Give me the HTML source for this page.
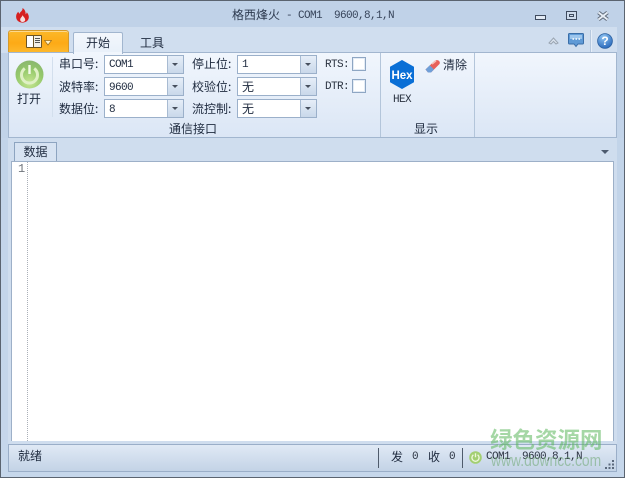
<!DOCTYPE html>
<html><head><meta charset="utf-8"><style>
html,body{margin:0;padding:0;width:625px;height:478px;overflow:hidden;background:#c4d5ea}
*{box-sizing:border-box}
#w{position:relative;width:625px;height:478px;overflow:hidden;font:12px "WenQuanYi Zen Hei","Noto Sans CJK SC",sans-serif;color:#1e2a3e;background:linear-gradient(#c0d2e8,#c6d7eb);border:1px solid #5b6470}
.a{position:absolute;white-space:nowrap}
.m{font-family:"Liberation Mono",monospace;font-size:11px;letter-spacing:-.6px;color:#2c3442}
.l{font-size:12px;line-height:16px;color:#1e2a3e}
.c{position:absolute;width:80px;height:19px;background:#fff;border:1px solid #9bb0ca}
.c i{position:absolute;right:0;top:0;width:16px;height:17px;background:linear-gradient(#e6eef8,#c9d8ea);border-left:1px solid #a8bbd2}
.c i:after{content:"";position:absolute;left:4px;top:7px;border:3px solid transparent;border-top:3px solid #47505e;border-bottom:0}
.c span{position:absolute;left:4px;top:1px;font-size:12px;line-height:16px;color:#1e2a3e}
.c span.m{left:4px;top:2px;line-height:14px;font-size:11px}
.k{position:absolute;width:14px;height:14px;background:#fff;border:1px solid #8ea6c3;box-shadow:inset 0 0 0 1px #e3ebf5}
</style></head><body><div id="w">
<!-- tab strip -->
<div class="a" style="left:-1px;top:26px;width:617px;height:26px;background:#d0deef"></div>
<!-- flame -->
<svg class="a" style="left:14px;top:7px" width="15" height="15" viewBox="0 0 15 15"><path d="M7.5 0C8 3 5 3.500 4.500 6 4 5 3.500 4.500 3.200 3.800 1.500 5.500.8 7.500 1.200 9.800 1.700 12.800 4.200 14.600 7.600 14.600 11 14.600 13.600 12.400 13.800 9.400 14 7 12.600 5.400 11.800 4.200 11.600 5.200 11.200 5.800 10.600 6.200 10.800 3.600 9.600 1.200 7.500 0Z" fill="#d61f1f"/><path d="M7.600 7C7.400 8.800 5 9.800 5.200 12 5.400 13.400 6.400 14 7.600 14 9 14 10.200 13.200 10.200 11.800 10.200 9.800 8.200 9 7.600 7Z" fill="#f5dede"/></svg>
<!-- title -->
<div class="a" style="left:231px;top:6px;font-size:12px;line-height:16px;color:#2d3a4f">格西烽火</div>
<div class="a m" style="left:285px;top:8px;line-height:14px;color:#37445a;white-space:pre">- COM1  9600,8,1,N</div>
<!-- window buttons -->
<div class="a" style="left:534px;top:14px;width:11px;height:5px;border:1px solid #3f4b5e;background:#e2eaf4"></div>
<div class="a" style="left:565px;top:10px;width:11px;height:9px;border:1px solid #3f4b5e;background:#cfdcec"><div style="position:absolute;left:2px;top:2px;width:5px;height:3px;border:1px solid #3f4b5e"></div></div>
<svg class="a" style="left:596px;top:10px" width="12" height="10" viewBox="0 0 12 10"><path d="M1.500 1.500 L10.500 8.500 M10.500 1.500 L1.500 8.500" stroke="#5c6776" stroke-width="3.800"/><path d="M1.500 1.500 L10.500 8.500 M10.500 1.500 L1.500 8.500" stroke="#e6edf5" stroke-width="2"/></svg>
<!-- orange button -->
<div class="a" style="left:7px;top:29px;width:61px;height:23px;border:1px solid #d49a2c;border-bottom:0;border-radius:3px 3px 0 0;background:linear-gradient(#fcb829 0,#fdaa16 55%,#fdb92f 100%);box-shadow:inset 0 1px 0 #fdd98c"></div>
<div class="a" style="left:25px;top:34px;width:16px;height:13px;background:#fff;border:1px solid #6d5524;border-radius:1px"><div style="position:absolute;left:6px;top:0;width:8px;height:11px;background:#f4f0e6;border-left:1px solid #6d5524"><div style="position:absolute;left:1px;top:2px;width:5px;height:6px;background:repeating-linear-gradient(#555 0 1px,transparent 1px 2px)"></div></div></div>
<svg class="a" style="left:43px;top:39px" width="8" height="6" viewBox="0 0 8 6"><path d="M.5.5H7.500L4 5Z" fill="#fff2c8" stroke="#9a6d1c" stroke-width=".7"/></svg>
<!-- tabs -->
<div class="a" style="left:72px;top:31px;width:50px;height:22px;background:linear-gradient(#f3f7fc,#e8f0fa);border:1px solid #a2b6cf;border-bottom:0;border-radius:2px 2px 0 0;z-index:2;text-align:center;line-height:19px;font-size:12px">开始</div>
<div class="a" style="left:139px;top:34px;font-size:12px;line-height:16px">工具</div>
<!-- ribbon right icons -->
<svg class="a" style="left:547px;top:35px" width="11" height="10" viewBox="0 0 11 10"><path d="M1 7 L5.500 2 L10 7 L8 8 L5.500 5.500 L3 8Z" fill="#dbe4ef" stroke="#9aa5b2"/></svg>
<svg class="a" style="left:567px;top:32px" width="16" height="15" viewBox="0 0 16 15"><path d="M1.500.5H14.500Q15.500.5 15.500 1.500V10Q15.500 11 14.500 11H10L8 13.500 6 11H1.500Q.5 11 .5 10V1.500Q.5.5 1.500.5Z" fill="#5f9ad6" stroke="#3a6ea8"/><path d="M2 2H14V6H2Z" fill="#9cc5ec"/><path d="M4.500 6H6M7.500 6H9M10.500 6H12" stroke="#fff" stroke-width="1.400"/></svg>
<div class="a" style="left:589px;top:29px;width:1px;height:22px;background:#b6c8de;box-shadow:1px 0 0 #e6eef8"></div>
<svg class="a" style="left:596px;top:32px" width="16" height="16" viewBox="0 0 16 16"><defs><radialGradient id="h" cx=".4" cy=".25" r=".85"><stop offset="0" stop-color="#8fc4f2"/><stop offset="1" stop-color="#1f5fb5"/></radialGradient></defs><circle cx="8" cy="8" r="7.400" fill="url(#h)" stroke="#2a5f9f" stroke-width=".8"/><text x="8" y="12.200" text-anchor="middle" font-family="Liberation Sans" font-weight="bold" font-size="12" fill="#fff">?</text></svg>
<!-- ribbon -->
<div class="a" style="left:7px;top:51px;width:609px;height:86px;background:linear-gradient(#f1f6fd,#dbe6f5);border:1px solid #a2b6cf"></div>
<div class="a" style="left:73px;top:51px;width:48px;height:2px;background:#f1f6fd;z-index:3"></div>
<div class="a" style="left:379px;top:52px;width:1px;height:84px;background:#b3c5da"></div>
<div class="a" style="left:473px;top:52px;width:1px;height:84px;background:#b3c5da"></div>
<div class="a" style="left:51px;top:56px;width:1px;height:60px;background:#d3dfed"></div>
<!-- power -->
<svg class="a" style="left:14px;top:59px" width="29" height="29" viewBox="0 0 29 29"><defs><radialGradient id="p" cx=".5" cy=".8" r=".8"><stop offset="0" stop-color="#c6e692"/><stop offset=".6" stop-color="#95c96b"/><stop offset="1" stop-color="#8ab66f"/></radialGradient></defs><circle cx="14.500" cy="14.500" r="14" fill="url(#p)"/><path d="M9.800 8.500A8 8 0 1 0 19.200 8.500" fill="none" stroke="#dff0c4" stroke-width="3"/><path d="M14.500 5V14" stroke="#f3faea" stroke-width="2.400"/></svg>
<div class="a l" style="left:16px;top:90px">打开</div>
<!-- labels -->
<div class="a l" style="left:58px;top:55px">串口号:</div>
<div class="a l" style="left:58px;top:78px">波特率:</div>
<div class="a l" style="left:58px;top:100px">数据位:</div>
<div class="a l" style="left:191px;top:55px">停止位:</div>
<div class="a l" style="left:191px;top:78px">校验位:</div>
<div class="a l" style="left:191px;top:100px">流控制:</div>
<div class="c" style="left:103px;top:54px"><span class="m">COM1</span><i></i></div>
<div class="c" style="left:103px;top:76px"><span class="m" style="top:3px">9600</span><i></i></div>
<div class="c" style="left:103px;top:98px"><span class="m" style="top:3px">8</span><i></i></div>
<div class="c" style="left:236px;top:54px"><span class="m">1</span><i></i></div>
<div class="c" style="left:236px;top:76px"><span>无</span><i></i></div>
<div class="c" style="left:236px;top:98px"><span>无</span><i></i></div>
<div class="a m" style="left:324px;top:57px;line-height:14px">RTS:</div>
<div class="a m" style="left:324px;top:79px;line-height:14px">DTR:</div>
<div class="k" style="left:351px;top:56px"></div>
<div class="k" style="left:351px;top:78px"></div>
<div class="a l" style="left:168px;top:120px">通信接口</div>
<!-- hex -->
<svg class="a" style="left:389px;top:59px" width="24" height="29" viewBox="0 0 24 29"><path d="M12 .5 23.500 7V22L12 28.500.5 22V7Z" fill="#0a6fd6" stroke="#0a6fd6" stroke-linejoin="round"/><text x="12" y="19" text-anchor="middle" font-family="Liberation Sans" font-weight="bold" font-size="11.500" fill="#fff">Hex</text></svg>
<div class="a m" style="left:392px;top:92px;line-height:14px">HEX</div>
<!-- eraser -->
<svg class="a" style="left:424px;top:58px" width="16" height="15" viewBox="0 0 16 15"><path d="M.5 10.500 9.500 2Q11.500.5 13.500 1.500 15.500 3 14.500 5L6 13.500H3Z" fill="#e8605a"/><path d="M.5 10.500 4.800 6.300 9 10.500 6 13.500H3Z" fill="#6f9fd8"/><path d="M7 5 11 1.800" stroke="#f6c0b8" stroke-width="1.600"/></svg>
<div class="a l" style="left:442px;top:56px">清除</div>
<div class="a l" style="left:413px;top:120px">显示</div>
<!-- body -->
<div class="a" style="left:-1px;top:137px;width:625px;height:2px;background:#c4d5ea"></div>
<div class="a" style="left:7px;top:137px;width:609px;height:307px;background:#cfddee"></div>
<div class="a" style="left:13px;top:141px;width:43px;height:20px;background:#d7e3f2;border:1px solid #8da4c0;border-bottom:0;text-align:center;line-height:17px;font-size:12px">数据</div>
<div class="a" style="left:600px;top:149px;border:4px solid transparent;border-top:4px solid #4d5a6e;border-bottom:0"></div>
<div class="a" style="left:10px;top:160px;width:603px;height:280px;background:#fff;border:1px solid #9db0c8;border-width:1px 1px 0 1px"></div>
<div class="a" style="left:26px;top:161px;width:1px;height:279px;border-left:1px dotted #aab0b8"></div>
<div class="a m" style="left:17px;top:161px;line-height:14px;color:#70757c;font-size:12px">1</div>
<!-- status bar -->
<div class="a" style="left:7px;top:443px;width:609px;height:28px;background:linear-gradient(#e0e9f5,#c3d3e6);border:1px solid #9aaec8"></div>
<div class="a l" style="left:17px;top:447px">就绪</div>
<div class="a" style="left:377px;top:447px;width:1px;height:20px;background:#4f5b6c"></div>
<div class="a" style="left:461px;top:447px;width:1px;height:20px;background:#4f5b6c"></div>
<div class="a l" style="left:390px;top:448px">发</div>
<div class="a m" style="left:411px;top:449px;line-height:14px">0</div>
<div class="a l" style="left:427px;top:448px">收</div>
<div class="a m" style="left:448px;top:449px;line-height:14px">0</div>
<svg class="a" style="left:468px;top:450px" width="13" height="13" viewBox="0 0 29 29"><circle cx="14.500" cy="14.500" r="14" fill="#a3cf72"/><path d="M9.800 8.500A8 8 0 1 0 19.200 8.500M14.500 5V14" fill="none" stroke="#eef7dc" stroke-width="3"/></svg>
<div class="a m" style="left:485px;top:449px;line-height:14px;white-space:pre">COM1  9600,8,1,N</div>
<svg class="a" style="left:604px;top:459px" width="10" height="9" viewBox="0 0 10 9"><g fill="#5c6a7d"><rect x="7" y="0" width="2" height="2"/><rect x="3.500" y="3.500" width="2" height="2"/><rect x="7" y="3.500" width="2" height="2"/><rect x="0" y="7" width="2" height="2"/><rect x="3.500" y="7" width="2" height="2"/><rect x="7" y="7" width="2" height="2"/></g></svg>
<!-- watermark -->
<div class="a" style="left:489px;top:425px;font:bold 22.5px/26px 'Noto Sans CJK SC','WenQuanYi Zen Hei',sans-serif;color:#5cb85c;opacity:.55">绿色资源网</div>
<div class="a" style="left:490px;top:450px;font:16.5px/20px 'Liberation Sans',sans-serif;color:#6fa873;opacity:.55;transform:scaleX(.84);transform-origin:0 0">www.downcc.com</div>
</div></body></html>
